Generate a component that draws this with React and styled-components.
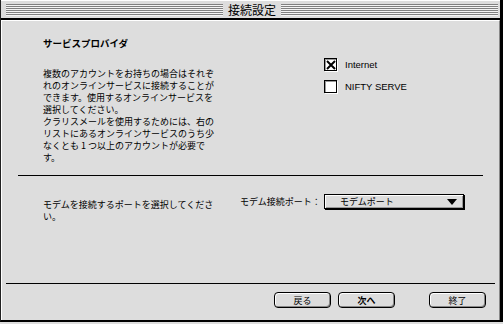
import React from "react";
import styled, { createGlobalStyle } from "styled-components";

const GlobalStyle = createGlobalStyle`
  html, body {
    margin: 0;
    padding: 0;
    background: #dddddd;
  }
  body {
    font-family: "Noto Sans CJK JP", "Liberation Sans", sans-serif;
    color: #000;
  }
`;

const App = () => {
  return (
    <>
      <GlobalStyle />
      <Window>
        <TitleBar>
          <Stripes />
          <TitleText>接続設定</TitleText>
          <Stripes />
        </TitleBar>
        <Panel>
          <TopSection>
            <TextColumn>
              <Heading>サービスプロバイダ</Heading>
              <Paragraph>
                複数のアカウントをお持ちの場合はそれぞ
                <br />
                れのオンラインサービスに接続することが
                <br />
                できます。使用するオンラインサービスを
                <br />
                選択してください。
                <br />
                クラリスメールを使用するためには、右の
                <br />
                リストにあるオンラインサービスのうち少
                <br />
                なくとも 1 つ以上のアカウントが必要で
                <br />
                す。
              </Paragraph>
            </TextColumn>
            <CheckList>
              <CheckRow>
                <CheckBox>
                  <svg width="10" height="10" viewBox="0 0 10 10">
                    <path d="M1 1 L9 9 M9 1 L1 9" stroke="#000" strokeWidth="2" />
                  </svg>
                </CheckBox>
                <CheckLabel>Internet</CheckLabel>
              </CheckRow>
              <CheckRow>
                <CheckBox />
                <CheckLabel>NIFTY SERVE</CheckLabel>
              </CheckRow>
            </CheckList>
          </TopSection>
          <Rule $inset={16} />
          <PortSection>
            <PortHint>
              モデムを接続するポートを選択してくださ
              <br />
              い。
            </PortHint>
            <PortLabel>モデム接続ポート：</PortLabel>
            <Popup>
              <PopupText>モデムポート</PopupText>
              <Arrow />
            </Popup>
          </PortSection>
          <Spacer />
          <Rule $inset={4} />
          <ButtonRow>
            <Button>戻る</Button>
            <Button $bold>次へ</Button>
            <Button $gap={34}>終了</Button>
          </ButtonRow>
        </Panel>
      </Window>
    </>
  );
};

const Window = styled.div`
  width: 503px;
  height: 322px;
  box-sizing: border-box;
  display: flex;
  flex-direction: column;
  background: #dddddd;
  border-left: 1px solid #222;
  border-right: 3px solid #000;
  border-bottom: 2px solid #000;
`;

const TitleBar = styled.div`
  height: 20px;
  box-sizing: border-box;
  display: flex;
  align-items: center;
  padding: 0 2px 0 5px;
  border-top: 1px solid #fff;
  border-bottom: 2px solid #000;
  background: #dddddd;
`;

const Stripes = styled.div`
  flex: 1;
  height: 12px;
  background: repeating-linear-gradient(
    to bottom,
    #808080 0px,
    #808080 1px,
    #f4f4f4 1px,
    #f4f4f4 2px
  );
`;

const TitleText = styled.div`
  padding: 0 5px;
  font-size: 12px;
  line-height: 14px;
`;

const Panel = styled.div`
  flex: 1;
  display: flex;
  flex-direction: column;
  border-top: 1px solid #fff;
  border-left: 1px solid #fff;
  border-right: 1px solid #888;
`;

const TopSection = styled.div`
  display: flex;
  padding: 16px 0 0 41px;
  height: 154px;
  box-sizing: border-box;
`;

const TextColumn = styled.div`
  width: 281px;
`;

const Heading = styled.div`
  font-size: 9.5px;
  font-weight: bold;
  line-height: 12px;
`;

const Paragraph = styled.div`
  margin-top: 19px;
  font-size: 9px;
  line-height: 12px;
  white-space: nowrap;
`;

const CheckList = styled.div`
  display: flex;
  flex-direction: column;
  gap: 9px;
  padding-top: 21px;
`;

const CheckRow = styled.div`
  display: flex;
  align-items: center;
  gap: 8px;
`;

const CheckBox = styled.div`
  width: 11px;
  height: 11px;
  border: 1px solid #000;
  background: #fff;
  box-shadow: 1px 1px 0 #fff, inset 1px 1px 0 #999;
  display: flex;
  align-items: center;
  justify-content: center;
`;

const CheckLabel = styled.span`
  font-family: "Liberation Sans", "DejaVu Sans", sans-serif;
  font-size: 9.5px;
`;

const Rule = styled.div`
  height: 1px;
  background: #000;
  margin: 0 ${(p) => p.$inset}px;
`;

const PortSection = styled.div`
  display: flex;
  align-items: flex-start;
  padding: 18px 0 0 41px;
`;

const PortHint = styled.div`
  width: 197px;
  margin-top: 5px;
  font-size: 9px;
  line-height: 12px;
  white-space: nowrap;
`;

const PortLabel = styled.div`
  margin-top: 2px;
  width: 84px;
  font-size: 9px;
  line-height: 12px;
  white-space: nowrap;
`;

const Popup = styled.div`
  width: 140px;
  height: 15px;
  box-sizing: border-box;
  display: flex;
  align-items: center;
  padding: 0 6px 0 15px;
  border: 1px solid #000;
  background: #dddddd;
  box-shadow: 1px 1px 0 #000, inset 1px 1px 0 #fff, inset -1px -1px 0 #999;
`;

const PopupText = styled.span`
  flex: 1;
  font-size: 9px;
  line-height: 12px;
`;

const Arrow = styled.div`
  width: 0;
  height: 0;
  border-left: 5px solid transparent;
  border-right: 5px solid transparent;
  border-top: 6px solid #000;
`;

const Spacer = styled.div`
  flex: 1;
`;

const ButtonRow = styled.div`
  display: flex;
  justify-content: flex-end;
  gap: 7px;
  padding: 8px 13px 12px 0;
`;

const Button = styled.div`
  width: 57px;
  height: 16px;
  box-sizing: border-box;
  margin-left: ${(p) => (p.$gap ? p.$gap - 7 : 0)}px;
  display: flex;
  align-items: center;
  justify-content: center;
  border: 1px solid #000;
  border-radius: 4px;
  background: #dddddd;
  box-shadow: inset 1px 1px 0 #fff, inset -1px -1px 0 #888;
  font-size: 9px;
  font-weight: ${(p) => (p.$bold ? "bold" : "normal")};
`;

export default App;
